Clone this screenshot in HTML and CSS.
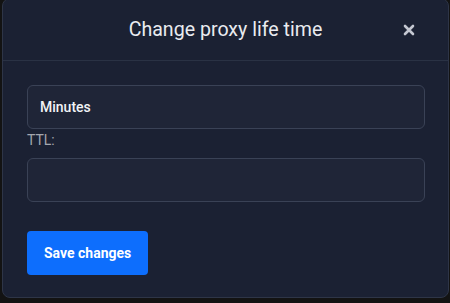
FILE: index.html
```html
<!DOCTYPE html>
<html lang="en">
<head>
    <meta charset="UTF-8">
    <meta name="viewport" content="width=device-width, initial-scale=1.0">
    <title>Change proxy life time</title>
    <link rel="stylesheet" href="styles.css">
</head>
<body>

    <div class="modal">

        <div class="modalHeader">
            <span></span>
            <h5 class="modalTitle">Change proxy life time</h5>
            <button class="btnClose" aria-label="Close">
                <svg width="12" height="12" viewBox="0 0 12 12">
                    <path d="M2 2 L10 10 M10 2 L2 10" stroke="#c4c7d1" stroke-width="2.6" stroke-linecap="round"/>
                </svg>
            </button>
        </div>

        <div class="modalBody">
            <input class="formControl" type="text" value="Minutes">
            <label class="formLabel" for="ttl">TTL:</label>
            <input id="ttl" class="formControl" type="text">

            <button class="btnSave">Save changes</button>
        </div>

    </div>

</body>
</html>
```

FILE: styles.css
```css
body{
    margin: 0;
    padding: 0 1px 0 2px;
    background-color: #131313;
    font-family: Roboto, "Liberation Sans", sans-serif;
}

.modal{
    margin-top: -2px;
    background-color: #1b2133;
    border: 1px solid #2e3547;
    border-radius: 8px;
}

.modalHeader{
    height: 61px;
    display: grid;
    grid-template-columns: 1fr auto 1fr;
    align-items: center;
    border-bottom: 1px solid #2a3244;
}

.modalTitle{
    margin: 0;
    font-size: 19.6px;
    font-weight: 400;
    color: #e9ebf0;
}

.btnClose{
    justify-self: end;
    margin-right: 32px;
    margin-top: 1px;
    padding: 0;
    width: 14px;
    height: 14px;
    display: flex;
    align-items: center;
    justify-content: center;
    background: none;
    border: none;
}

.modalBody{
    padding: 24px 23px 22px 24px;
    display: flex;
    flex-direction: column;
    align-items: flex-start;
}

.formControl{
    box-sizing: border-box;
    width: 100%;
    height: 44px;
    margin: 0;
    padding: 0 12px;
    background-color: #1f2537;
    border: 1px solid #3a4256;
    border-radius: 6px;
    color: #f2f3f6;
    font-family: inherit;
    font-size: 14px;
    font-weight: 500;
}

.formLabel{
    margin: 1px 0 7px;
    font-size: 14px;
    line-height: 21px;
    color: #a3a6ae;
}

.btnSave{
    margin-top: 29px;
    height: 44px;
    padding: 0 17px;
    background-color: #0d6efd;
    border: none;
    border-radius: 4px;
    color: #ffffff;
    font-family: inherit;
    font-size: 14px;
    font-weight: 700;
}
```
